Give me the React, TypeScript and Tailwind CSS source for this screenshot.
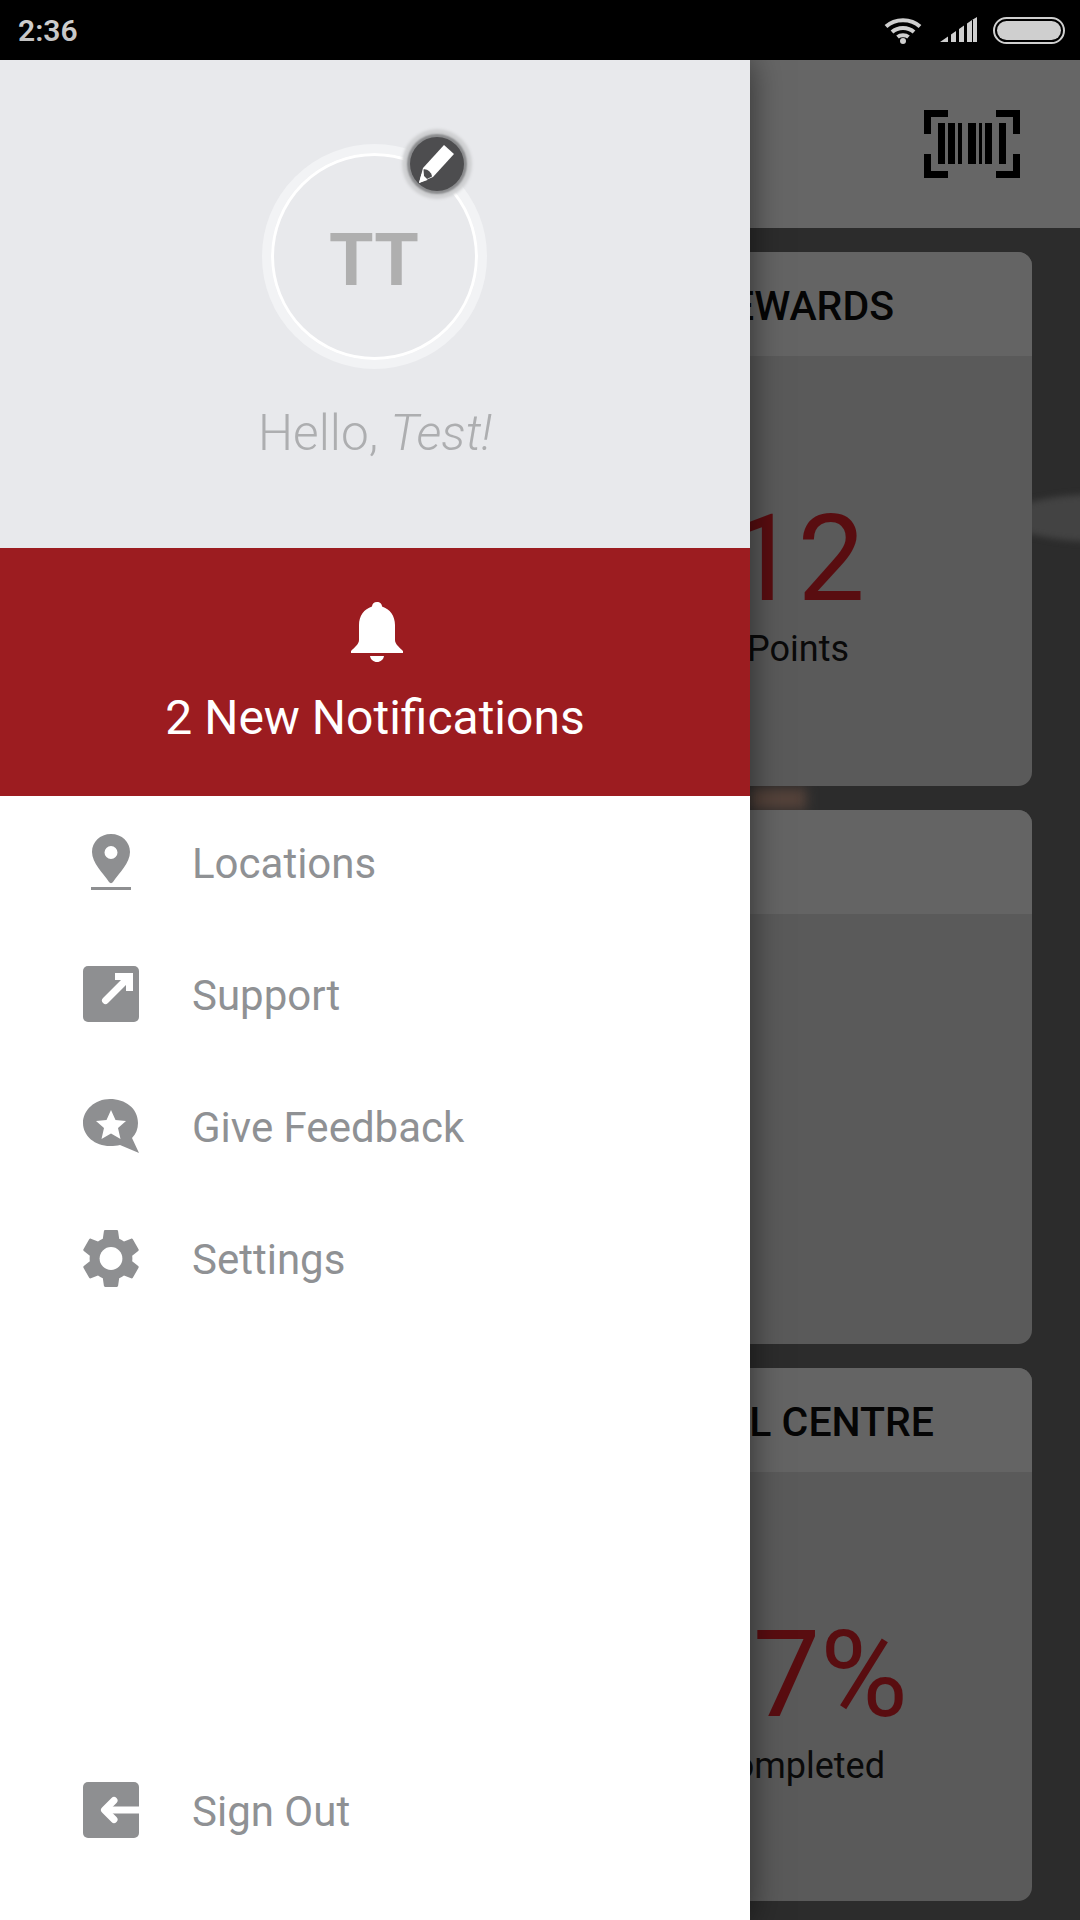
const ICON = "#8e8f91";

function MenuRow({ icon, label }: { icon: React.ReactNode; label: string }) {
    return (
        <div className="flex h-[132px] items-center pl-[83px]">
            <div className="flex h-[60px] w-[56px] items-center justify-center">{icon}</div>
            <span className="ml-[53px] mt-[2px] text-[42px] text-[#8f9194]">{label}</span>
        </div>
    );
}

function PinIcon() {
    return (
        <svg width="40" height="56" viewBox="0 0 40 56">
            <path fill={ICON} fillRule="evenodd" d="M20 0C9 0 1 8 1 18c0 11 11 21 17 30 1 1.500 3 1.500 4 0 6-9 17-19 17-30C39 8 31 0 20 0zm0 12a6.500 6.500 0 1 1 0 13 6.500 6.500 0 0 1 0-13z" />
            <rect x="0" y="53" width="40" height="3" fill={ICON} />
        </svg>
    );
}

function ArrowOutIcon() {
    return (
        <svg width="56" height="56" viewBox="0 0 56 56">
            <rect width="56" height="56" rx="5" fill={ICON} />
            <path d="M32 10.500H46.500V25" fill="none" stroke="#fff" strokeWidth="7" />
            <path d="M45 12L22.500 34.500" fill="none" stroke="#fff" strokeWidth="7" strokeLinecap="round" />
        </svg>
    );
}

function FeedbackIcon() {
    return (
        <svg width="56" height="54" viewBox="0 0 56 54">
            <path fill={ICON} d="M27 0c15 0 28 9 28 24 0 6-2 11-6 15l7 15-19-8c-3 .7-6 1-10 1C12 47 0 37 0 24S12 0 27 0z" />
            <path fill="#fff" d="M28 11l4.500 10 10.500 1-8 7 2.500 11L28 34.500 18.500 40 21 29l-8-7 10.500-1z" />
        </svg>
    );
}

function GearIcon() {
    return (
        <svg width="56" height="57" viewBox="2.2 2 19.600 20">
            <path fill={ICON} d="M19.43 12.98c.04-.32.07-.64.07-.98s-.03-.66-.07-.98l2.11-1.65c.19-.15.24-.42.12-.64l-2-3.46c-.12-.22-.39-.3-.61-.22l-2.49 1c-.52-.4-1.08-.73-1.69-.98l-.38-2.65C14.46 2.18 14.25 2 14 2h-4c-.25 0-.46.18-.49.42l-.38 2.65c-.61.25-1.17.59-1.69.98l-2.49-1c-.23-.09-.49 0-.61.22l-2 3.46c-.13.22-.07.49.12.64l2.11 1.65c-.04.32-.07.65-.07.98s.03.66.07.98l-2.11 1.65c-.19.15-.24.42-.12.64l2 3.46c.12.22.39.3.61.22l2.49-1c.52.4 1.08.73 1.69.98l.38 2.65c.03.24.24.42.49.42h4c.25 0 .46-.18.49-.42l.38-2.65c.61-.25 1.17-.59 1.69-.98l2.49 1c.23.09.49 0 .61-.22l2-3.46c.12-.22.07-.49-.12-.64l-2.11-1.65z" />
            <circle cx="12" cy="12" r="4" fill="#fff" />
        </svg>
    );
}

function SignOutIcon() {
    return (
        <svg width="56" height="56" viewBox="0 0 56 56">
            <rect width="56" height="56" rx="5" fill={ICON} />
            <rect x="24" y="24.500" width="32" height="7" fill="#fff" />
            <path d="M31 18.500L21.500 28l9.500 9.500" fill="none" stroke="#fff" strokeWidth="7" strokeLinecap="round" strokeLinejoin="round" />
        </svg>
    );
}

function BellIcon() {
    return (
        <svg width="52" height="60" viewBox="0 0 52 60">
            <path fill="#fff" d="M26 0c3 0 5 2 5 4.500C39 7 44 14 44 23v15c0 4 4 7 8 11v2H0v-2c4-4 8-7 8-11V23C8 14 13 7 21 4.500 21 2 23 0 26 0z" />
            <path fill="#fff" d="M19 54h14c-.5 3.500-3.500 6-7 6s-6.500-2.500-7-6z" />
        </svg>
    );
}

function PencilIcon() {
    return (
        <svg width="36" height="38" viewBox="0 0 36 38">
            <path fill="#fff" d="M25 0l10 9L14 32 0 38l4-15z" />
            <path fill="#4d4d4f" d="M4.500 24.500c3-1 8 2.500 8.500 7L8 34l-3-3z" />
            <path fill="#fff" d="M0 38l2.500-9 6 6z" />
        </svg>
    );
}

function WifiIcon() {
    return (
        <svg width="38" height="27" viewBox="0 0 38 27">
            <g fill="none" stroke="#cfcfcf" strokeWidth="4">
                <path d="M2 9.500C11 1 27 1 36 9.500" />
                <path d="M8 15c6-5.500 16-5.500 22 0" />
                <path d="M13.500 20c3-2.500 8-2.500 11 0" />
            </g>
            <circle cx="19" cy="24" r="3" fill="#cfcfcf" />
        </svg>
    );
}

function SignalIcon() {
    return (
        <svg width="38" height="26" viewBox="0 0 38 26">
            <path fill="#cfcfcf" d="M0 25L8 19.500V25zM11 17.500l5-3.500V25h-5zM19 12l5-3.500V25h-5zM27 6.500L32 3 37 0v25H27z" />
            <path fill="#000" d="M32 3h1v22h-1z" />
        </svg>
    );
}

function BarcodeIcon() {
    return (
        <svg width="96" height="68" viewBox="0 0 96 68">
            <path fill="none" stroke="#000" strokeWidth="7" d="M24 3.500H3.500V24M72 3.500h20.500V24M24 64.500H3.500V44M72 64.500h20.500V44" />
            <path fill="#000" d="M14 13h7v41h-7zM24 13h7v41h-7zM34 13h4v41h-4zM44 13h8v41h-8zM55 13h3v41h-3zM61 13h7v41h-7zM75 13h7v41h-7z" />
        </svg>
    );
}

function Card({ title, titlePr, value, valuePr, caption, captionPr, captionMt, mt, bodyH, valueMt }: {
    title: string; titlePr: string; value?: string; valuePr?: string; caption?: string; captionPr?: string; captionMt?: string; mt: string; bodyH: string; valueMt?: string;
}) {
    return (
        <div className={`ml-[48px] w-[984px] overflow-hidden rounded-[14px] bg-[#5a5a5a] ${mt}`}>
            <div className={`flex h-[104px] items-center justify-end bg-[#646464] pt-[6px] text-[41px] font-medium text-[#050505] ${titlePr}`}>{title}</div>
            <div className={`${bodyH} flex flex-col items-end`}>
                {value && <div className={`${valueMt} text-[120px] leading-[120px] text-[#590d10] ${valuePr}`}>{value}</div>}
                {caption && <div className={`${captionMt} text-[36px] leading-[44px] text-[#0a0a0a] ${captionPr}`}>{caption}</div>}
            </div>
        </div>
    );
}

export default function App() {
    return (
        <div className="relative h-[1920px] w-[1080px] overflow-hidden bg-[#2c2c2c] font-['Roboto',sans-serif]">
            <div className="flex h-[60px] items-center justify-between bg-black pl-[18px] pr-[15px]">
                <span className="text-[30px] font-semibold text-[#cfcfcf]">2:36</span>
                <div className="flex items-center">
                    <WifiIcon />
                    <div className="ml-[18px]"><SignalIcon /></div>
                    <div className="ml-[15px] h-[27px] w-[72px] rounded-full border-[2px] border-[#cfcfcf] p-[2px]">
                        <div className="h-full w-full rounded-full bg-[#cfcfcf]" />
                    </div>
                </div>
            </div>

            <div className="flex h-[168px] items-center justify-end bg-[#666666] pr-[60px]">
                <BarcodeIcon />
            </div>

            {/* blurred photo showing through the scrim */}
            <div className="absolute left-[1006px] top-[494px] h-[48px] w-[200px] rounded-[50%] bg-[#434343] blur-[3px]" />
            <div className="absolute left-[750px] top-[788px] h-[22px] w-[56px] bg-[#54423a] blur-[6px]" />

            <div className="relative">
                <Card title="REWARDS" titlePr="pr-[138px]" value="12" valuePr="pr-[167px]" caption="Points" captionPr="pr-[183px]" captionMt="mt-[8px]" mt="mt-[24px]" bodyH="h-[430px]" valueMt="mt-[143px]" />
                <Card title="" titlePr="" mt="mt-[24px]" bodyH="h-[430px]" />
                <Card title="SKILL CENTRE" titlePr="pr-[98px]" value="7%" valuePr="pr-[124px]" caption="Completed" captionPr="pr-[147px]" captionMt="mt-[9px]" mt="mt-[24px]" bodyH="h-[429px]" valueMt="mt-[143px]" />
            </div>

            {/* drawer sits over the dimmed page */}
            <div className="absolute bottom-0 left-0 top-[60px] flex w-[750px] flex-col bg-white shadow-[0_0_32px_rgba(0,0,0,0.55)]">
                <div className="flex h-[488px] flex-col items-center bg-[#e8e9ec] pt-[84px]">
                    <div className="relative h-[225px] w-[225px] -translate-x-px rounded-full border-[9px] border-[#f2f3f5]">
                        <div className="flex h-full w-full items-center justify-center rounded-full border-[3px] border-white">
                            <span className="mt-[8px] text-[72px] font-bold leading-none text-[#afafaf]">TT</span>
                        </div>
                        <div className="absolute left-[139px] top-[-16px] flex h-[54px] w-[54px] items-center justify-center rounded-full bg-[#4d4d4f] shadow-[0_0_2px_3px_#8a8b8d,0_0_3px_8px_#cfd0d2]">
                            <PencilIcon />
                        </div>
                    </div>
                    <div className="mt-[37px] text-[49.5px] font-light leading-[54px] text-[#adaeb0]">
                        Hello, <em>Test!</em>
                    </div>
                </div>

                <div className="flex h-[248px] flex-col items-center bg-[#9c1c20] pt-[54px]">
                    <div className="translate-x-[2px]"><BellIcon /></div>
                    <span className="mt-[27px] text-[48px] leading-[58px] text-white">2 New Notifications</span>
                </div>

                <MenuRow icon={<PinIcon />} label="Locations" />
                <MenuRow icon={<ArrowOutIcon />} label="Support" />
                <MenuRow icon={<FeedbackIcon />} label="Give Feedback" />
                <MenuRow icon={<GearIcon />} label="Settings" />
                <div className="mt-auto pb-[44px]">
                    <MenuRow icon={<SignOutIcon />} label="Sign Out" />
                </div>
            </div>
        </div>
    );
}
